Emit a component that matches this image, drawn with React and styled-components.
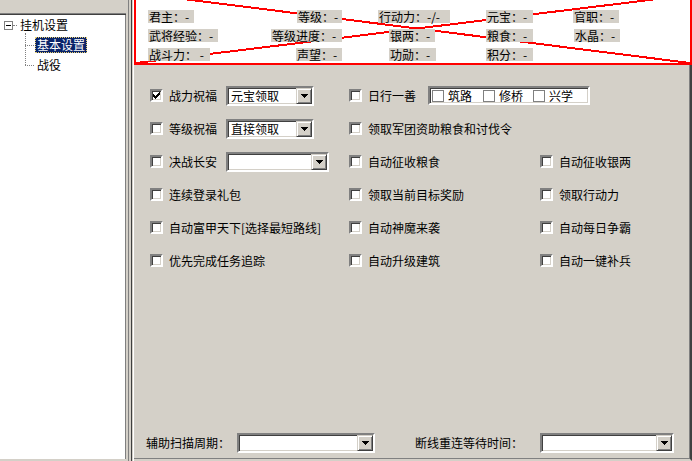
import React from 'react';
import styled, { createGlobalStyle } from 'styled-components';

const GlobalStyle = createGlobalStyle`
  html, body {
    margin: 0;
    padding: 0;
    background: #d4d0c8;
  }
  body {
    font-family: "Noto Sans CJK SC", "Noto Sans", sans-serif;
    font-size: 12px;
    color: #000;
  }
`;

const Window = styled.div`
  width: 692px;
  height: 461px;
  display: flex;
  overflow: hidden;
  background: #d4d0c8;
`;

/* ---------- left tree ---------- */

const LeftPane = styled.div`
  width: 126px;
  display: flex;
  flex-direction: column;
`;

const PaneHeader = styled.div`
  height: 13px;
  background: #d4d0c8;
`;

const Tree = styled.div`
  flex: 1;
  background: #fff;
  border-top: 1px solid #808080;
  border-bottom: 2px solid #d4d0c8;
  box-shadow: inset 0 1px 0 #404040, inset -1px 0 0 #808080;
  padding-top: 3px;
`;

const RootRow = styled.div`
  display: flex;
  align-items: center;
  height: 16px;
  padding-left: 4px;
`;

const ExpandBox = styled.span`
  position: relative;
  width: 7px;
  height: 7px;
  border: 1px solid #808080;
  background: #fff;
  &::after {
    content: '';
    position: absolute;
    left: 1px;
    top: 3px;
    width: 5px;
    height: 1px;
    background: #000;
  }
`;

const Connector = styled.span`
  width: 4px;
  border-top: 1px dotted #808080;
  margin-right: 1px;
`;

const Children = styled.div`
  margin-left: 25px;
`;

const ChildRow = styled.div`
  position: relative;
  height: 16px;
  margin-top: 4px;
  padding-left: 10px;
  display: flex;
  align-items: center;
  &::before {
    content: '';
    position: absolute;
    left: 0;
    top: -12px;
    height: 20px;
    border-left: 1px dotted #808080;
  }
  &:first-child::before {
    top: -4px;
    height: 12px;
  }
  &::after {
    content: '';
    position: absolute;
    left: 0;
    top: 8px;
    width: 9px;
    border-top: 1px dotted #808080;
  }
`;

const NodeLabel = styled.span`
  height: 16px;
  line-height: 16px;
  padding: 0 2px;
  white-space: nowrap;
  box-sizing: border-box;
  background: ${p => (p.$selected ? '#0a246a' : 'transparent')};
  color: ${p => (p.$selected ? '#fff' : '#000')};
  outline: ${p => (p.$selected ? '1px dotted #e8d070' : 'none')};
  outline-offset: -1px;
`;

const Splitter = styled.div`
  width: 8px;
  background: linear-gradient(
    to right,
    #d4d0c8 0 2px,
    #808080 2px 3px,
    #d4d0c8 3px 5px,
    #404040 5px 6px,
    #d4d0c8 6px 7px,
    #ffffff 7px 8px
  );
`;

/* ---------- right side ---------- */

const Main = styled.div`
  flex: 1;
  display: flex;
  flex-direction: column;
`;

const InfoBox = styled.div`
  position: relative;
  height: 65px;
  box-sizing: border-box;
  background: #fff;
  border: 2px solid #f00;
  border-top: none;
  padding: 10px 0 0 12px;
`;

const CrossLines = styled.svg`
  position: absolute;
  left: 0;
  top: 0;
  width: 100%;
  height: 100%;
  overflow: visible;
`;

const InfoGrid = styled.div`
  position: relative;
  display: grid;
  grid-template-columns: 112px 82px 144px 87px auto;
  grid-auto-rows: 13px;
  row-gap: 6px;
`;

const InfoLabel = styled.span`
  grid-column: ${p => p.$col};
  grid-row: ${p => p.$row};
  justify-self: ${p => (p.$end ? 'end' : 'start')};
  margin-left: ${p => p.$shift || 0}px;
  width: ${p => p.$w}px;
  height: 13px;
  line-height: 13px;
  padding-left: 1px;
  box-sizing: border-box;
  background: #d4d0c8;
  white-space: nowrap;
`;

const Panel = styled.div`
  flex: 1;
  display: flex;
  flex-direction: column;
  background: #d4d0c8;
  border-right: 2px solid #404040;
  border-bottom: 2px solid #d4d0c8;
  box-shadow: inset -1px 0 0 #808080, inset 0 -1px 0 #808080;
`;

const OptionsGrid = styled.div`
  display: grid;
  grid-template-columns: 199px 191px auto;
  grid-auto-rows: 33px;
  padding: 14px 0 0 16px;
`;

const Option = styled.div`
  grid-column: ${p => p.$col || 'auto'};
  display: flex;
  align-items: center;
  white-space: nowrap;
`;

const CheckBox = styled.span`
  flex: none;
  width: ${p => (p.$flat ? 12 : 13)}px;
  height: ${p => (p.$flat ? 12 : 13)}px;
  box-sizing: border-box;
  background: #fff;
  display: flex;
  align-items: center;
  justify-content: center;
  ${p =>
    p.$flat
      ? 'border: 1px solid #808080;'
      : `border: 2px solid;
         border-color: #808080 #fff #fff #808080;
         box-shadow: inset 1px 1px 0 #404040, inset -1px -1px 0 #d4d0c8;`}
`;

const OptionText = styled.span`
  flex: none;
  margin-left: ${p => (p.$tight ? 4 : 6)}px;
  width: ${p => (p.$w ? `${p.$w}px` : 'auto')};
  line-height: 16px;
`;

const Combo = styled.div`
  flex: none;
  width: ${p => p.$w}px;
  height: 20px;
  box-sizing: border-box;
  margin-left: ${p => p.$gap || 0}px;
  background: #fff;
  border: 2px solid;
  border-color: #808080 #fff #fff #808080;
  box-shadow: inset 1px 1px 0 #404040, inset -1px -1px 0 #d4d0c8;
  display: flex;
  align-items: center;
`;

const ComboText = styled.span`
  flex: 1;
  padding-left: 3px;
  line-height: 16px;
`;

const DropButton = styled.span`
  width: 16px;
  height: 16px;
  box-sizing: border-box;
  background: #d4d0c8;
  border: 1px solid;
  border-color: #d4d0c8 #404040 #404040 #d4d0c8;
  box-shadow: inset 1px 1px 0 #fff, inset -1px -1px 0 #808080;
  display: flex;
  align-items: center;
  justify-content: center;
`;

const SubBox = styled.div`
  width: 162px;
  height: 19px;
  margin-left: 12px;
  box-sizing: border-box;
  background: #fff;
  border: 2px solid;
  border-color: #808080 #fff #fff #808080;
  box-shadow: inset 1px 1px 0 #404040, inset -1px -1px 0 #d4d0c8;
  display: flex;
  align-items: center;
  padding-left: 2px;
`;

const SubItem = styled.div`
  width: ${p => p.$w}px;
  display: flex;
  align-items: center;
`;

const BottomBar = styled.div`
  margin-top: auto;
  display: flex;
  align-items: center;
  padding: 0 0 6px 12px;
`;

const FieldLabel = styled.span`
  margin-left: ${p => p.$gap || 0}px;
  line-height: 16px;
  white-space: nowrap;
`;

const Check = () => (
  <svg width="7" height="7" viewBox="0 0 7 7" shapeRendering="crispEdges">
    <path
      fill="#000"
      d="M6 0h1v1h-1z M5 1h2v1h-2z M0 2h1v1h-1z M4 2h3v1h-3z M0 3h2v1h-2z M3 3h3v1h-3z M0 4h5v1h-5z M1 5h3v1h-3z M2 6h1v1h-1z"
    />
  </svg>
);

const Arrow = () => (
  <svg width="7" height="4" viewBox="0 0 7 4" shapeRendering="crispEdges">
    <path fill="#000" d="M0 0h7v1h-7z M1 1h5v1h-5z M2 2h3v1h-3z M3 3h1v1h-1z" />
  </svg>
);

const Select = ({ w, gap, value }) => (
  <Combo $w={w} $gap={gap}>
    <ComboText>{value}</ComboText>
    <DropButton>
      <Arrow />
    </DropButton>
  </Combo>
);

const infoLabels = [
  { row: 1, col: 1, w: 46, text: '君主：-' },
  { row: 1, col: 2, w: 45, end: true, text: '等级：-' },
  { row: 1, col: 3, w: 72, shift: 36, text: '行动力：-/-' },
  { row: 1, col: 4, w: 47, text: '元宝：-' },
  { row: 1, col: 5, w: 46, text: '官职：-' },
  { row: 2, col: 1, w: 70, text: '武将经验：-' },
  { row: 2, col: 2, w: 71, end: true, text: '等级进度：-' },
  { row: 2, col: 3, w: 46, shift: 47, text: '银两：-' },
  { row: 2, col: 4, w: 47, text: '粮食：-' },
  { row: 2, col: 5, w: 46, shift: 1, text: '水晶：-' },
  { row: 3, col: 1, w: 62, text: '战斗力： -' },
  { row: 3, col: 2, w: 46, end: true, text: '声望：-' },
  { row: 3, col: 3, w: 47, shift: 47, text: '功勋：-' },
  { row: 3, col: 4, w: 47, text: '积分：-' }
];

const Item = ({ label, checked, col }) => (
  <Option $col={col}>
    <CheckBox>{checked && <Check />}</CheckBox>
    <OptionText>{label}</OptionText>
  </Option>
);

export default function App() {
  return (
    <Window>
      <GlobalStyle />
      <LeftPane>
        <PaneHeader />
        <Tree>
          <RootRow>
            <ExpandBox />
            <Connector />
            <NodeLabel>挂机设置</NodeLabel>
          </RootRow>
          <Children>
            <ChildRow>
              <NodeLabel $selected>基本设置</NodeLabel>
            </ChildRow>
            <ChildRow>
              <NodeLabel>战役</NodeLabel>
            </ChildRow>
          </Children>
        </Tree>
      </LeftPane>
      <Splitter />
      <Main>
        <InfoBox>
          <CrossLines viewBox="0 0 552 63" preserveAspectRatio="none" shapeRendering="crispEdges">
            <line x1="0" y1="-7" x2="552" y2="63" stroke="#f00" strokeWidth="2" />
            <line x1="0" y1="63" x2="552" y2="-5" stroke="#f00" strokeWidth="2" />
          </CrossLines>
          <InfoGrid>
            {infoLabels.map(l => (
              <InfoLabel
                key={l.text}
                $row={l.row}
                $col={l.col}
                $w={l.w}
                $end={l.end}
                $shift={l.shift}
              >
                {l.text}
              </InfoLabel>
            ))}
          </InfoGrid>
        </InfoBox>
        <Panel>
          <OptionsGrid>
            <Option>
              <CheckBox>
                <Check />
              </CheckBox>
              <OptionText $w={57}>战力祝福</OptionText>
              <Select w={88} value="元宝领取" />
            </Option>
            <Option $col="2 / span 2">
              <CheckBox />
              <OptionText>日行一善</OptionText>
              <SubBox>
                <SubItem $w={51}>
                  <CheckBox $flat />
                  <OptionText $tight>筑路</OptionText>
                </SubItem>
                <SubItem $w={50}>
                  <CheckBox $flat />
                  <OptionText $tight>修桥</OptionText>
                </SubItem>
                <SubItem $w={50}>
                  <CheckBox $flat />
                  <OptionText $tight>兴学</OptionText>
                </SubItem>
              </SubBox>
            </Option>

            <Option>
              <CheckBox />
              <OptionText $w={57}>等级祝福</OptionText>
              <Select w={88} value="直接领取" />
            </Option>
            <Item col="2 / span 2" label="领取军团资助粮食和讨伐令" />

            <Option>
              <CheckBox />
              <OptionText $w={57}>决战长安</OptionText>
              <Select w={103} value="" />
            </Option>
            <Item label="自动征收粮食" />
            <Item label="自动征收银两" />

            <Item label="连续登录礼包" />
            <Item label="领取当前目标奖励" />
            <Item label="领取行动力" />

            <Item label="自动富甲天下[选择最短路线]" />
            <Item label="自动神魔来袭" />
            <Item label="自动每日争霸" />

            <Item label="优先完成任务追踪" />
            <Item label="自动升级建筑" />
            <Item label="自动一键补兵" />
          </OptionsGrid>
          <BottomBar>
            <FieldLabel>辅助扫描周期：</FieldLabel>
            <Select w={138} gap={7} value="" />
            <FieldLabel $gap={40}>断线重连等待时间：</FieldLabel>
            <Select w={134} gap={17} value="" />
          </BottomBar>
        </Panel>
      </Main>
    </Window>
  );
}
